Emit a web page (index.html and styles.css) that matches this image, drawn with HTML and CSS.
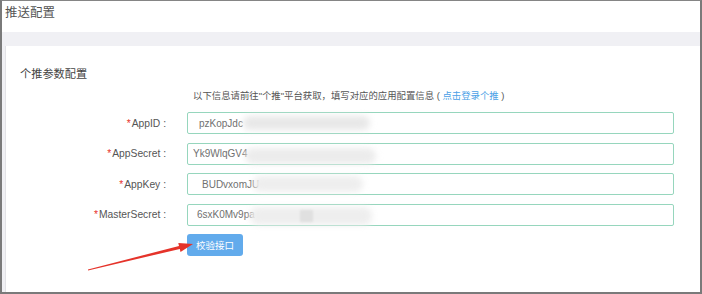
FILE: index.html
```html
<!DOCTYPE html>
<html lang="zh-CN">
<head>
    <meta charset="UTF-8">
    <meta name="viewport" content="width=device-width, initial-scale=1.0">
    <title>推送配置</title>
    <link rel="stylesheet" href="styles.css">
</head>
<body>
    <div class="frame">
        <header class="page-header">推送配置</header>

        <div class="content">
            <section class="panel">
                <h2 class="panel-title">个推参数配置</h2>

                <div class="form">
                    <div></div>
                    <p class="form-tip">以下信息请前往"个推"平台获取，填写对应的应用配置信息 ( <a href="#" class="tip-link">点击登录个推</a> )</p>

                    <label class="field-label"><span class="req">*</span>AppID :</label>
                    <div class="field">
                        <input class="field-input pad-app-id" value="pzKopJdc" readonly>
                        <span class="smudge smudge-app-id"></span>
                    </div>

                    <label class="field-label"><span class="req">*</span>AppSecret :</label>
                    <div class="field">
                        <input class="field-input pad-app-secret" value="Yk9WlqGV4" readonly>
                        <span class="smudge smudge-app-secret"></span>
                    </div>

                    <label class="field-label"><span class="req">*</span>AppKey :</label>
                    <div class="field">
                        <input class="field-input pad-app-key" value="BUDvxomJU" readonly>
                        <span class="smudge smudge-app-key"></span>
                    </div>

                    <label class="field-label"><span class="req">*</span>MasterSecret :</label>
                    <div class="field">
                        <input class="field-input pad-master" value="6sxK0Mv9pa" readonly>
                        <span class="smudge smudge-master"></span>
                        <span class="smudge smudge-master-dark"></span>
                    </div>

                    <div></div>
                    <div class="actions">
                        <button class="btn-check">校验接口</button>
                    </div>
                </div>
            </section>
        </div>

        <!-- annotation arrow pointing at the button -->
        <svg class="arrow" width="702" height="294" viewBox="0 0 702 294">
            <polygon points="88,270.6 179.8,248.9 180.5,251.9 193,244 178.3,243 179,245.9 88,269.6" fill="#e5332a"/>
        </svg>
    </div>
</body>
</html>
```

FILE: styles.css
```css
body, html {
    margin: 0;
    padding: 0;
    background: #fff;
    font-family: "Liberation Sans", "Noto Sans CJK SC", sans-serif;
    color: #555;
}

.frame {
    position: relative;
    width: 702px;
    height: 294px;
    box-sizing: border-box;
    border-top: 1px solid #858585;
    border-left: 2px solid #7a7a7a;
    border-right: 2px solid #7a7a7a;
    border-bottom: 2px solid #7a7a7a;
    overflow: hidden;
    display: flex;
    flex-direction: column;
}

.page-header {
    height: 31px;
    line-height: 24px;
    padding-left: 3px;
    font-size: 12.5px;
    color: #555;
}

/* grey strip + white card */
.content {
    flex: 1;
    background: #f0f0f4;
    padding: 14px 0 0 3px;
    display: flex;
}

.panel {
    flex: 1;
    background: #fff;
    border-left: 1px solid #e2e2e6;
}

.panel-title {
    margin: 20px 0 0 14px;
    font-size: 11.2px;
    line-height: 16px;
    font-weight: normal;
    color: #444;
}

.form {
    display: grid;
    grid-template-columns: 160px 487px;
    column-gap: 21px;
    row-gap: 8.5px;
    align-items: center;
    margin-top: 6px;
}

.form-tip {
    margin: 0 0 -0.5px 0;
    font-size: 9.4px;
    line-height: 16px;
    color: #555;
    padding-left: 6px;
}

.tip-link {
    color: #4a9fe6;
    text-decoration: none;
}

.field-label {
    text-align: right;
    font-size: 10.3px;
    color: #555;
}

.req {
    color: #e8332e;
    margin-right: 1px;
}

.field {
    position: relative;
    height: 22px;
}

.field-input {
    width: 100%;
    height: 22px;
    box-sizing: border-box;
    border: 1px solid #96d6bd;
    border-radius: 2px;
    font-family: "Liberation Sans", sans-serif;
    font-size: 10px;
    color: #707070;
    outline: none;
    background: #fff;
}

.pad-app-id { padding-left: 11px; }
.pad-app-secret { padding-left: 5px; }
.pad-app-key { padding-left: 14px; }
.pad-master { padding-left: 9px; }

/* blurred-out secrets */
.smudge {
    position: absolute;
    background: #e8e8e8;
    border-radius: 8px;
    filter: blur(3px);
    pointer-events: none;
}

.smudge-app-id {
    left: 56px;
    top: 4px;
    width: 127px;
    height: 14px;
}

.smudge-app-secret {
    left: 58px;
    top: 5px;
    width: 131px;
    height: 16px;
    background: #ececec;
}

.smudge-app-key {
    left: 66px;
    top: 3px;
    width: 110px;
    height: 16px;
    background: #eeeeee;
}

.smudge-master {
    left: 63px;
    top: 3px;
    width: 122px;
    height: 18px;
    background: #eeeeee;
}

.smudge-master-dark {
    left: 113px;
    top: 6px;
    width: 13px;
    height: 12px;
    background: #e0e0e0;
    border-radius: 1px;
    filter: blur(1px);
}

.actions {
    display: flex;
}

.btn-check {
    width: 56px;
    height: 22px;
    border: none;
    border-radius: 3px;
    background: #62abec;
    color: #fff;
    font-family: "Noto Sans CJK SC", sans-serif;
    font-size: 9.5px;
    padding: 0;
}

.arrow {
    position: absolute;
    left: -2px;
    top: -1px;
    pointer-events: none;
}
```
